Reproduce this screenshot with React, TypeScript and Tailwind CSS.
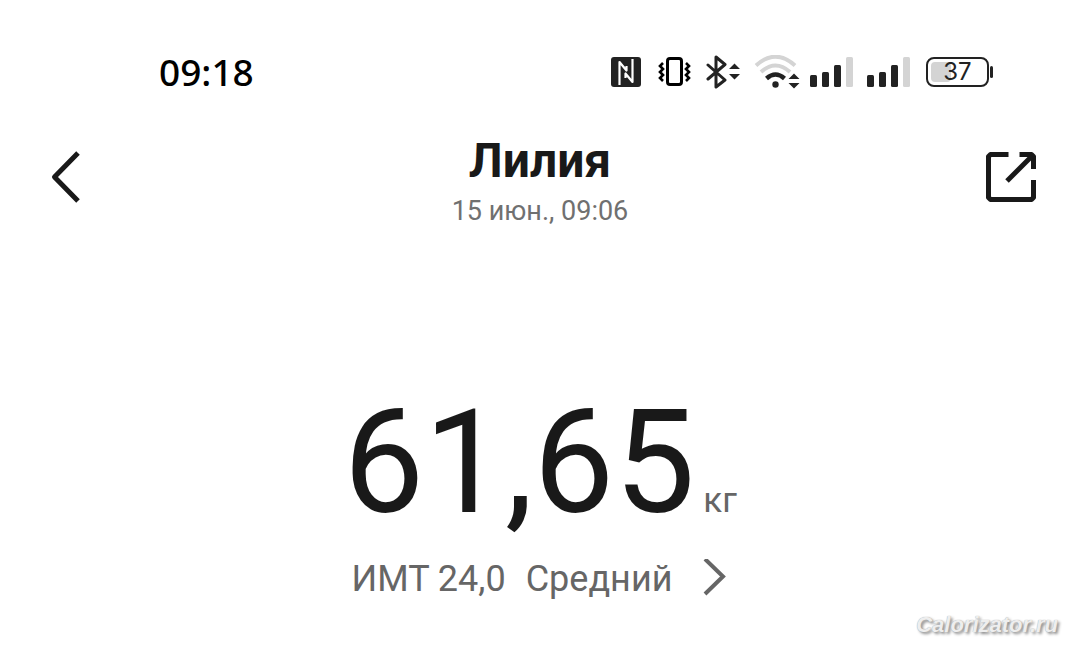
import React from 'react';

function NfcIcon() {
  return (
    <svg width="35" height="34" viewBox="0 0 35 34" role="img" aria-label="NFC">
      <rect x="0" y="2" width="30" height="30" rx="3" fill="#222" />
      <path
        d="M8.5 30V7L15.5 15.5V11M21.5 4V27L14.5 18.5V23"
        fill="none"
        stroke="#fff"
        strokeWidth="2.2"
        strokeLinejoin="round"
      />
    </svg>
  );
}

function VibrateIcon() {
  return (
    <svg width="42" height="34" viewBox="0 0 42 34" fill="none" stroke="#000" role="img" aria-label="Вибрация">
      <rect x="13.5" y="3.5" width="14" height="26" rx="2.5" strokeWidth="3" />
      <path d="M9 8L6 11L9 14L6 17L9 20L6 23L9 26" strokeWidth="2.6" />
      <path d="M32 8L35 11L32 14L35 17L32 20L35 23L32 26" strokeWidth="2.6" />
    </svg>
  );
}

function BluetoothIcon() {
  return (
    <svg width="40" height="34" viewBox="0 0 40 34" role="img" aria-label="Bluetooth">
      <path
        d="M4 10L21 25L12 32V2L21 9.5L4 24"
        fill="none"
        stroke="#222"
        strokeWidth="3"
        strokeLinecap="round"
        strokeLinejoin="round"
      />
      <path d="M25 14L30.5 8.5L36 14ZM25 19L30.5 24.5L36 19Z" fill="#222" />
    </svg>
  );
}

function WifiIcon() {
  return (
    <svg width="49" height="34" viewBox="0 0 49 34" role="img" aria-label="Wi-Fi">
      <path d="M4 10.5Q23.5-7 43 10.5" fill="none" stroke="#d4d4d4" strokeWidth="4" />
      <path d="M9 17Q23.5 4 38 17" fill="none" stroke="#d4d4d4" strokeWidth="4" />
      <path d="M14.5 23.5Q23.5 15.5 32.5 23.5" fill="none" stroke="#222" strokeWidth="4.5" />
      <circle cx="23.5" cy="29.5" r="3.2" fill="#222" />
      <path d="M36.5 24L42 18.5L47.5 24ZM36.5 28L42 33.5L47.5 28Z" fill="#222" />
    </svg>
  );
}

function SignalIcon() {
  return (
    <svg width="49" height="34" viewBox="0 0 49 34" fill="#222" role="img" aria-label="Сигнал">
      <rect x="1" y="20" width="7" height="12" rx="1.5" />
      <rect x="13" y="17" width="7" height="15" rx="1.5" />
      <rect x="25" y="10" width="7" height="22" rx="1.5" />
      <rect x="37" y="2" width="7" height="30" rx="1.5" fill="#d4d4d4" />
    </svg>
  );
}

function Battery({ level }: { level: number }) {
  return (
    <div className="flex items-center gap-px pl-[3px]">
      <div className="relative flex h-[30px] w-[63px] items-center justify-center rounded-lg border-2 border-[#222]">
        <div className="absolute inset-y-[3px] left-[3px] w-5 rounded-sm bg-[#d4d4d4]" />
        <span className="relative font-['Inter',sans-serif] text-2xl leading-6 text-[#222]">{level}</span>
      </div>
      <div className="h-3 w-[3px] rounded-sm bg-[#222]" />
    </div>
  );
}

function StatusBar() {
  return (
    <div className="flex items-center justify-between pr-[87px] pl-[159px]">
      <time className="font-['Noto_Sans',sans-serif] text-[37px] leading-10 font-medium text-black">09:18</time>
      <div className="flex items-center gap-2">
        <NfcIcon />
        <VibrateIcon />
        <BluetoothIcon />
        <WifiIcon />
        <SignalIcon />
        <SignalIcon />
        <Battery level={37} />
      </div>
    </div>
  );
}

function Header() {
  return (
    <header className="flex items-start justify-between px-10 pt-11">
      <button type="button" aria-label="Назад" className="pt-3">
        <svg width="56" height="56" viewBox="0 0 56 56" fill="none" stroke="#191919" strokeWidth="5">
          <path d="M38 5L14.5 29L38 53" strokeLinejoin="round" />
        </svg>
      </button>
      <div className="text-center">
        <h1 className="text-5xl leading-[50px] font-bold text-[#191919]">Лилия</h1>
        <p className="pt-1 text-[27px] leading-[42px] text-[#707070]">15 июн., 09:06</p>
      </div>
      <button type="button" aria-label="Поделиться" className="pt-3">
        <svg width="56" height="56" viewBox="0 0 56 56" fill="none" stroke="#191919" strokeWidth="5">
          <path
            d="M24.5 6.5H6.5L4.5 8.5V49.5L6.5 51.5H47.5L49.5 49.5V32M35.5 6.5H47.5L49.5 8.5V21"
            strokeLinejoin="round"
          />
          <path d="M48 8L23 33" />
        </svg>
      </button>
    </header>
  );
}

function Weight() {
  return (
    <section className="flex flex-col items-center pt-[151px]">
      <p className="flex items-baseline gap-2 text-[#191919]">
        <span className="text-[144px] leading-40">61,65</span>
        <span className="text-[35px] text-[#666]">кг</span>
      </p>
      <button type="button" className="flex items-center gap-5 pt-4 pl-2 text-4xl leading-10 text-[#666]">
        <span>ИМТ 24,0</span>
        <span>Средний</span>
        <svg width="44" height="40" viewBox="0 0 44 40" fill="none" stroke="#666" strokeWidth="4" aria-hidden="true">
          <path d="M13 0L31 17.5L13 35" />
        </svg>
      </button>
    </section>
  );
}

export default function App() {
  return (
    <main className="relative min-h-screen bg-white pt-[52px] font-['Roboto',sans-serif]">
      <StatusBar />
      <Header />
      <Weight />
      <span className="absolute right-[22px] bottom-2 font-['Liberation_Sans',sans-serif] text-[22px] leading-6 font-bold text-[#eee] italic [text-shadow:0_0_1px_#999,2px_2px_3px_#888]">
        Calorizator.ru
      </span>
    </main>
  );
}
